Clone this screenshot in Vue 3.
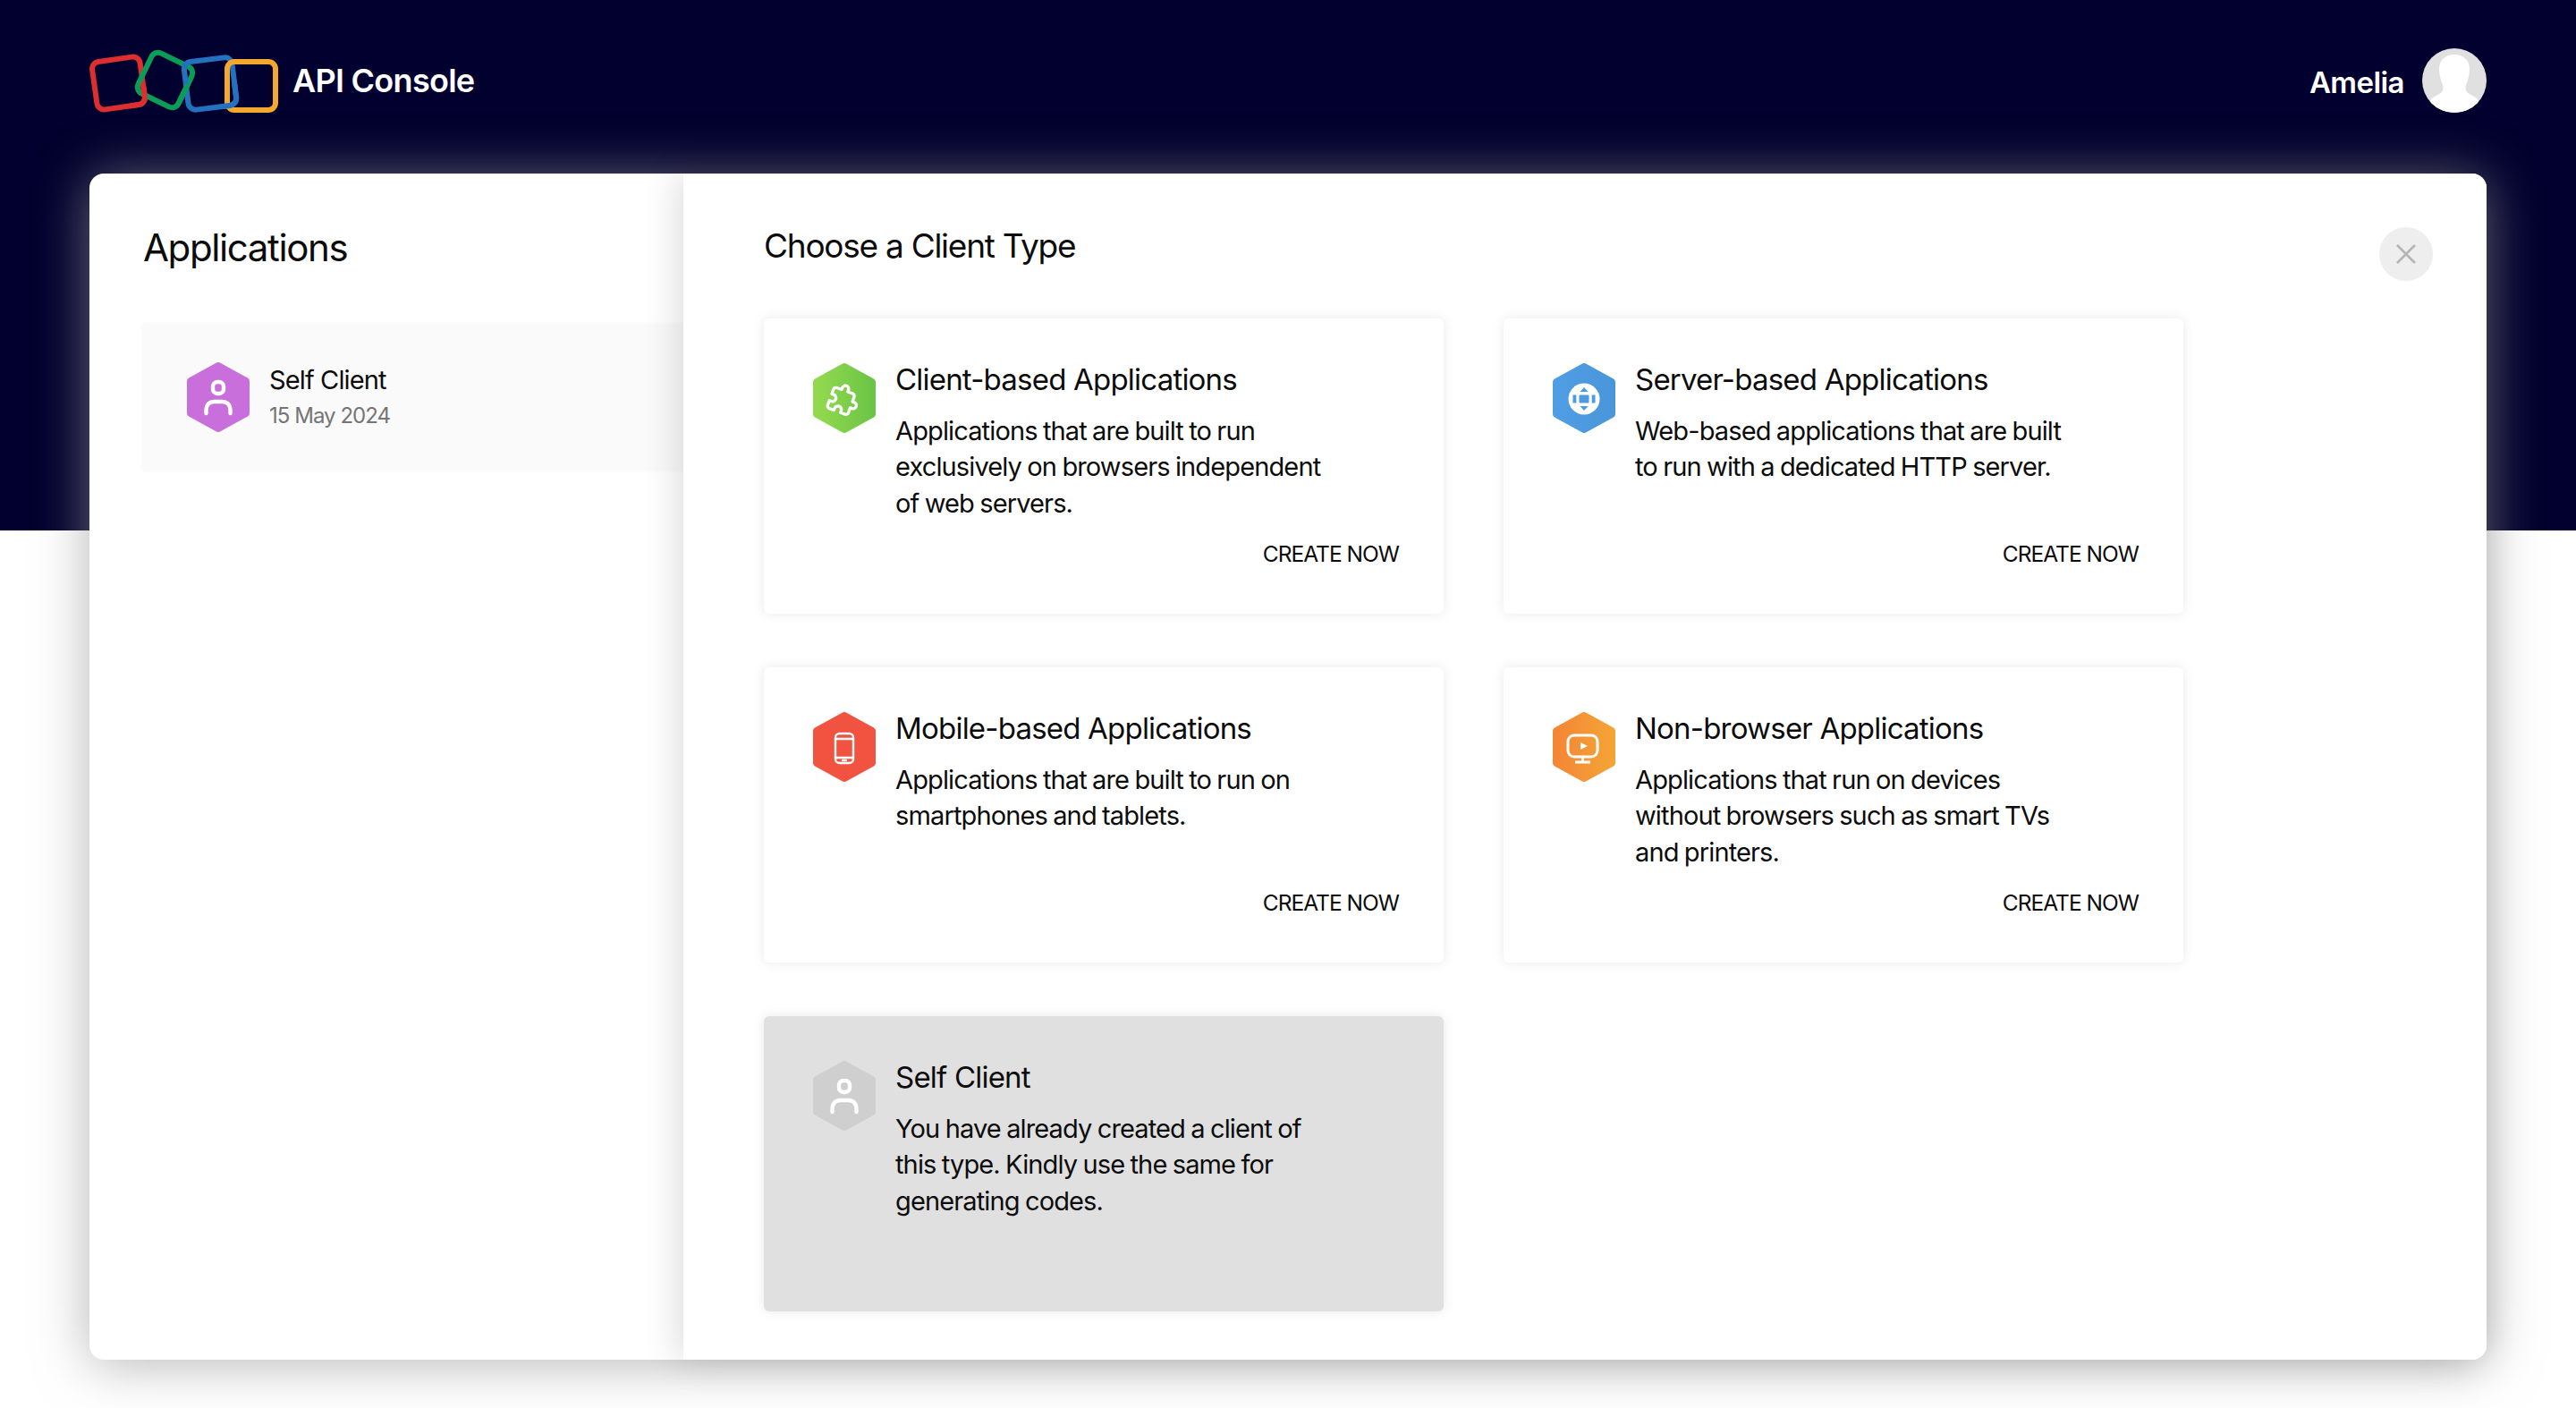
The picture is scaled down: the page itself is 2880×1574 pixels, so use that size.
<script setup>
const cards = [
  { title: 'Client-based Applications', lines: ['Applications that are built to run', 'exclusively on browsers independent', 'of web servers.'], icon: 'puzzle' },
  { title: 'Server-based Applications', lines: ['Web-based applications that are built', 'to run with a dedicated HTTP server.'], icon: 'globe' },
  { title: 'Mobile-based Applications', lines: ['Applications that are built to run on', 'smartphones and tablets.'], icon: 'phone' },
  { title: 'Non-browser Applications', lines: ['Applications that run on devices', 'without browsers such as smart TVs', 'and printers.'], icon: 'tv' },
  { title: 'Self Client', lines: ['You have already created a client of', 'this type. Kindly use the same for', 'generating codes.'], icon: 'self', disabled: true }
]
const hexagon = '35,4 66,21 66,57 35,74 4,57 4,21'
</script>

<template>
  <div class="page">
    <header class="top">
      <div class="brand">
        <svg class="logo" width="212" height="80" viewBox="0 0 212 80" fill="none" stroke-width="6">
          <defs>
            <clipPath id="lowRed"><rect x="45" y="44" width="24" height="36" /></clipPath>
            <clipPath id="lowGreen"><rect x="96" y="44" width="30" height="36" /></clipPath>
            <clipPath id="lowBlue"><rect x="150" y="44" width="22" height="36" /></clipPath>
          </defs>
          <rect x="5.500" y="16" width="54" height="54" rx="8" stroke="#dd2e30" transform="rotate(-8 32.500 43)" />
          <rect x="59.500" y="14.500" width="50" height="50" rx="8" stroke="#0a9d58" transform="rotate(26 84.500 39.500)" />
          <rect x="108" y="16.500" width="54" height="54" rx="8" stroke="#2472bf" transform="rotate(-7 135 43.500)" />
          <rect x="154" y="19" width="54" height="54" rx="8" stroke="#f5a82e" />
          <g clip-path="url(#lowRed)"><rect x="5.500" y="16" width="54" height="54" rx="8" stroke="#dd2e30" transform="rotate(-8 32.500 43)" /></g>
          <g clip-path="url(#lowGreen)"><rect x="59.500" y="14.500" width="50" height="50" rx="8" stroke="#0a9d58" transform="rotate(26 84.500 39.500)" /></g>
          <g clip-path="url(#lowBlue)"><rect x="108" y="16.500" width="54" height="54" rx="8" stroke="#2472bf" transform="rotate(-7 135 43.500)" /></g>
        </svg>
        <span class="brand-name">API Console</span>
      </div>
      <div class="user">
        <span class="user-name">Amelia</span>
        <svg class="avatar" width="72" height="72" viewBox="0 0 72 72">
          <defs><clipPath id="avatarClip"><circle cx="36" cy="36" r="36" /></clipPath></defs>
          <circle cx="36" cy="36" r="36" fill="#dfe0df" />
          <path clip-path="url(#avatarClip)" fill="#fff" d="M36 7c-10 0-17 6-17 16 0 7 2 13 4 18 1 4 0 7-2 9l-9 5C9 58 6 64 6 72h60c0-8-3-14-6-17l-9-5c-2-2-3-5-2-9 2-5 4-11 4-18 0-10-7-16-17-16z" />
        </svg>
      </div>
    </header>

    <main class="panel">
      <aside class="side">
        <h2 class="side-title">Applications</h2>
        <div class="side-item">
          <svg class="side-hex" width="70" height="78" viewBox="0 0 70 78">
            <polygon :points="hexagon" fill="#c96fdc" stroke="#c96fdc" stroke-width="8" stroke-linejoin="round" />
            <rect x="29" y="22" width="12" height="13" rx="5" fill="none" stroke="#fff" stroke-width="4.400" />
            <path d="M21.500 57v-3c0-6 3-10 9-10h9c6 0 9 4 9 10v3" fill="none" stroke="#fff" stroke-width="4.400" stroke-linecap="round" />
          </svg>
          <div class="side-text">
            <div class="side-name">Self Client</div>
            <div class="side-date">15 May 2024</div>
          </div>
        </div>
      </aside>

      <section class="content">
        <button class="close" aria-label="Close">
          <svg width="22" height="22" viewBox="0 0 22 22" stroke="#b5b5b5" stroke-width="2.600" fill="none"><path d="M1 1l20 20M21 1L1 21" /></svg>
        </button>
        <h2 class="content-title">Choose a Client Type</h2>
        <div class="grid">
          <article v-for="c in cards" :key="c.title" class="card" :class="{ off: c.disabled }">
            <svg class="hex" width="70" height="78" viewBox="0 0 70 78">
              <defs>
                <linearGradient id="gGreen" x1="0" x2="1" y1="0" y2="0"><stop offset="0" stop-color="#93d94f" /><stop offset="1" stop-color="#6cc545" /></linearGradient>
                <linearGradient id="gBlue" x1="0" x2="1" y1="0" y2="0"><stop offset="0" stop-color="#4f9de3" /><stop offset="1" stop-color="#4a96db" /></linearGradient>
                <linearGradient id="gOrange" x1="0" x2="1" y1="0" y2="0"><stop offset="0" stop-color="#f48636" /><stop offset="1" stop-color="#f4a435" /></linearGradient>
              </defs>
              <polygon v-if="c.icon === 'puzzle'" :points="hexagon" fill="url(#gGreen)" stroke="url(#gGreen)" stroke-width="8" stroke-linejoin="round" />
              <polygon v-else-if="c.icon === 'globe'" :points="hexagon" fill="url(#gBlue)" stroke="url(#gBlue)" stroke-width="8" stroke-linejoin="round" />
              <polygon v-else-if="c.icon === 'phone'" :points="hexagon" fill="#f15340" stroke="#f15340" stroke-width="8" stroke-linejoin="round" />
              <polygon v-else-if="c.icon === 'tv'" :points="hexagon" fill="url(#gOrange)" stroke="url(#gOrange)" stroke-width="8" stroke-linejoin="round" />
              <polygon v-else :points="hexagon" fill="#cfcfcf" stroke="#cfcfcf" stroke-width="8" stroke-linejoin="round" />

              <g v-if="c.icon === 'puzzle'" transform="translate(34 41) rotate(20) scale(1.450) translate(-12 -12)">
                <path fill="none" stroke="#fff" stroke-width="2.300" stroke-linejoin="round" d="M20.500 11H19V7c0-1.100-.9-2-2-2h-4V3.500C13 2.120 11.880 1 10.500 1S8 2.120 8 3.500V5H4c-1.100 0-2 .9-2 2v3.800h1.500c1.500 0 2.700 1.200 2.700 2.700s-1.200 2.700-2.700 2.700H2V20c0 1.100.9 2 2 2h3.800v-1.500c0-1.500 1.200-2.700 2.700-2.700s2.700 1.200 2.700 2.700V22H17c1.100 0 2-.9 2-2v-4h1.500c1.400 0 2.500-1.100 2.500-2.500S21.900 11 20.500 11z" />
              </g>
              <g v-else-if="c.icon === 'globe'">
                <circle cx="35" cy="40" r="17.500" fill="#fff" />
                <g fill="#4c9ae0">
                  <rect x="29.500" y="35.500" width="11" height="9" rx="1" />
                  <path d="M35 27l4.500 5h-9zM35 53l4.500-5h-9z" />
                  <rect x="22.500" y="35.500" width="3.800" height="9" />
                  <rect x="43.700" y="35.500" width="3.800" height="9" />
                </g>
              </g>
              <g v-else-if="c.icon === 'phone'" fill="none" stroke="#fff" stroke-width="2.400">
                <rect x="25" y="24" width="20" height="33" rx="4.500" />
                <path d="M25 30h20M25 51h20" />
                <path d="M33 54h4" stroke-linecap="round" />
              </g>
              <g v-else-if="c.icon === 'tv'" fill="none" stroke="#fff" stroke-width="3">
                <rect x="17" y="26" width="33" height="24" rx="7" />
                <path d="M33.500 50v5M25 56h17" />
                <path d="M31 34l8 4-8 4z" fill="#fff" stroke="none" />
              </g>
              <g v-else>
                <rect x="29" y="22" width="12" height="13" rx="5" fill="none" stroke="#fff" stroke-width="4.400" />
                <path d="M21.500 57v-3c0-6 3-10 9-10h9c6 0 9 4 9 10v3" fill="none" stroke="#fff" stroke-width="4.400" stroke-linecap="round" />
              </g>
            </svg>
            <div class="card-body">
              <h3 class="card-title">{{ c.title }}</h3>
              <p class="card-text"><span v-for="l in c.lines" :key="l" class="line">{{ l }}</span></p>
            </div>
            <a v-if="!c.disabled" class="create">CREATE NOW</a>
          </article>
        </div>
      </section>
    </main>
  </div>
</template>

<style>
html, body { margin: 0; background: #fff; }
</style>

<style scoped>
.page {
  height: 1574px;
  overflow: hidden;
  box-sizing: border-box;
  padding: 0 100px;
  background: linear-gradient(#02002e 593px, #fff 593px);
  font-family: Inter, "Liberation Sans", sans-serif;
  color: #0c0c0c;
  letter-spacing: -0.035em;
}
.top { height: 194px; display: flex; align-items: flex-start; justify-content: space-between; }
.brand { display: flex; align-items: center; margin-top: 50px; }
.logo { display: block; }
.brand-name { margin-left: 15px; color: #fff; font-size: 36px; font-weight: 600; letter-spacing: -0.02em; }
.user { display: flex; align-items: center; margin-top: 54px; gap: 20px; }
.user-name { color: #fff; font-size: 33px; font-weight: 600; padding-top: 3px; }
.avatar { display: block; }
.panel {
  height: 1326px;
  display: flex;
  border-radius: 16px;
  background: #fff;
  box-shadow: 0 4px 60px rgba(150, 150, 150, 0.7);
}
.side { width: 664px; flex: none; padding: 58px 0 0 60px; box-sizing: border-box; }
.side-title { margin: 0; font-size: 42px; font-weight: 400; line-height: 50px; letter-spacing: -0.033em; }
.side-item {
  margin-top: 60px;
  height: 164px;
  display: flex;
  align-items: center;
  padding-left: 49px;
  background: #fafafa;
  box-shadow: 0 0 4px rgba(0, 0, 0, 0.05);
}
.side-hex { display: block; }
.side-text { margin-left: 22px; }
.side-name { font-size: 29px; line-height: 36px; letter-spacing: -0.03em; }
.side-date { margin-top: 6px; font-size: 24px; line-height: 32px; color: #757575; letter-spacing: -0.04em; }
.content {
  flex: 1;
  position: relative;
  padding: 57px 0 0 90px;
  background: #fff;
  border-radius: 0 16px 16px 0;
  box-shadow: -6px 0 40px rgba(0, 0, 0, 0.14);
}
.close {
  position: absolute;
  top: 60px;
  right: 60px;
  width: 60px;
  height: 60px;
  border: 0;
  padding: 0;
  border-radius: 50%;
  background: #eeeeee;
  display: flex;
  align-items: center;
  justify-content: center;
}
.content-title { margin: 0; font-size: 37px; font-weight: 400; line-height: 48px; letter-spacing: -0.034em; }
.grid {
  margin-top: 57px;
  display: grid;
  grid-template-columns: 760px 760px;
  grid-auto-rows: 330px;
  column-gap: 67px;
  row-gap: 60px;
}
.card {
  position: relative;
  display: flex;
  box-sizing: border-box;
  padding: 50px 50px 0 55px;
  background: #fff;
  border-radius: 6px;
  box-shadow: 0 0 14px rgba(0, 0, 0, 0.09);
}
.card.off { background: #e0e0e0; }
.hex { display: block; flex: none; }
.card-body { margin-left: 22px; }
.card-title { margin: -5px 0 0; font-size: 33px; font-weight: 400; line-height: 46px; letter-spacing: -0.024em; }
.card-text { margin: 15px 0 0; font-size: 29px; line-height: 40.300px; letter-spacing: -0.03em; word-spacing: -1px; }
.line { display: block; white-space: nowrap; }
.create {
  position: absolute;
  right: 50px;
  bottom: 52px;
  font-size: 24.500px;
  line-height: 30px;
  letter-spacing: -0.04em;
}
</style>
